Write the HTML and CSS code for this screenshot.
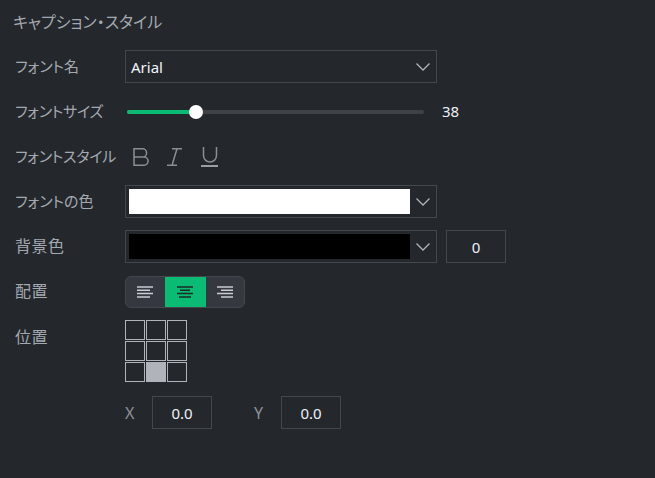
FILE: index.html
```html
<!DOCTYPE html>
<html lang="ja">
<head>
  <meta charset="UTF-8" />
  <title>キャプション・スタイル</title>
  <link rel="stylesheet" href="styles.css">
</head>
<body>
<h1 class="title">キャプション・スタイル</h1>

<div class="row">
  <label class="label">フォント名</label>
  <div class="select">
    <span class="select-text">Arial</span>
    <svg class="arrow" width="14" height="8" viewBox="0 0 14 8"><path d="M.5.500L7 7 13.500.5"/></svg>
  </div>
</div>

<div class="row">
  <label class="label label-tight">フォントサイズ</label>
  <div class="slider">
    <div class="slider-fill"></div>
    <div class="slider-thumb"></div>
  </div>
  <span class="slider-value">38</span>
</div>

<div class="row">
  <label class="label label-tight">フォントスタイル</label>
  <div class="styles">
    <svg width="17" height="20" viewBox="0 0 17 20"><path d="M2 1.800h8.500a4 4 0 0 1 0 8.200H2zM2 10h10a4 4 0 0 1 0 8.200H2z"/></svg>
    <svg width="18" height="20" viewBox="0 0 18 20"><path d="M6 1.800h10M1 18.200h10M11 1.800l-5 16.400"/></svg>
    <svg width="18" height="20" viewBox="0 0 18 20"><path d="M2.500 0v8.500a6.500 6.500 0 0 0 13 0V0"/><path class="underline" d="M0 19h17"/></svg>
  </div>
</div>

<div class="row">
  <label class="label">フォントの色</label>
  <div class="select select-color">
    <div class="swatch swatch-white"></div>
    <svg class="arrow" width="14" height="8" viewBox="0 0 14 8"><path d="M.5.500L7 7 13.500.5"/></svg>
  </div>
</div>

<div class="row">
  <label class="label label-kanji">背景色</label>
  <div class="select select-color">
    <div class="swatch swatch-black"></div>
    <svg class="arrow" width="14" height="8" viewBox="0 0 14 8"><path d="M.5.500L7 7 13.500.5"/></svg>
  </div>
  <div class="num num-opacity">0</div>
</div>

<div class="row">
  <label class="label label-kanji">配置</label>
  <div class="align">
    <div class="align-btn">
      <svg width="16" height="12" viewBox="0 0 16 12"><path d="M0 1h16M0 4.300h13M0 7.600h16M0 10.900h13"/></svg>
    </div>
    <div class="align-btn active">
      <svg width="16" height="12" viewBox="0 0 16 12"><path d="M0 1h16M3 4.300h10M0 7.600h16M2 10.900h12"/></svg>
    </div>
    <div class="align-btn">
      <svg width="16" height="12" viewBox="0 0 16 12"><path d="M0 1h16M4 4.300h12M0 7.600h16M4 10.900h12"/></svg>
    </div>
  </div>
</div>

<div class="row row-top">
  <label class="label label-kanji">位置</label>
  <div class="grid">
    <div class="cell"></div><div class="cell"></div><div class="cell"></div>
    <div class="cell"></div><div class="cell"></div><div class="cell"></div>
    <div class="cell"></div><div class="cell on"></div><div class="cell"></div>
  </div>
</div>

<div class="row row-pos">
  <span class="axis">X</span>
  <div class="num">0.0</div>
  <span class="axis axis-y">Y</span>
  <div class="num">0.0</div>
</div>
</body>
</html>
```

FILE: styles.css
```css
body {
  margin: 0;
  padding: 0 15px;
  background: #24272c;
  color: #a4a9b1;
  font-family: "Noto Sans CJK JP", "Noto Sans", sans-serif;
  font-size: 15px;
  font-feature-settings: "palt";
  overflow: hidden;
}
.title {
  margin: 0 0 17px -2px;
  height: 33px;
  line-height: 43px;
  font-size: 16px;
  font-weight: 400;
}
.row {
  display: flex;
  align-items: center;
  height: 33px;
  margin-bottom: 12px;
}
.row-top {
  align-items: flex-start;
  height: 62px;
  margin-bottom: 14px;
}
.row-top .label {
  padding-bottom: 0;
  line-height: 32px;
}
.label {
  flex: none;
  width: 110px;
  padding-bottom: 3px;
  white-space: nowrap;
}
.label-tight {
  letter-spacing: -0.25px;
}
.label-kanji {
  font-size: 16px;
  letter-spacing: 0.5px;
}
.select {
  display: flex;
  align-items: center;
  box-sizing: border-box;
  width: 312px;
  height: 33px;
  padding: 0 6px 0 5px;
  border: 1px solid #44474d;
}
.select-text {
  flex: 1;
  color: #f2f6fb;
  font-family: "Noto Sans", sans-serif;
  font-size: 15px;
}
.select-color {
  padding: 0 6px 0 3px;
}
.arrow {
  flex: none;
  fill: none;
  stroke: #b0b4bb;
  stroke-width: 1.300;
}
.swatch {
  flex: 1;
  height: 25px;
  margin-right: 6px;
}
.swatch-white { background: #fff; }
.swatch-black { background: #000; }
.slider {
  position: relative;
  width: 297px;
  height: 4px;
  margin-left: 2px;
  background: #3e4147;
  border-radius: 2px;
}
.slider-fill {
  width: 69px;
  height: 4px;
  background: #0abb74;
  border-radius: 2px;
}
.slider-thumb {
  position: absolute;
  left: 62px;
  top: -5px;
  width: 14px;
  height: 14px;
  background: #fff;
  border-radius: 50%;
}
.slider-value {
  margin-left: 18px;
  padding-bottom: 1px;
  color: #eef2f7;
  font-family: "Noto Sans", sans-serif;
}
.styles {
  display: flex;
  align-items: center;
  gap: 17px;
  margin-left: 7px;
}
.styles svg {
  fill: none;
  stroke: #8a8e95;
  stroke-width: 1.500;
}
.styles .underline {
  stroke: #9a9ea5;
  stroke-width: 2;
}
.num {
  box-sizing: border-box;
  width: 60px;
  height: 33px;
  line-height: 33px;
  text-align: center;
  border: 1px solid #44474d;
  color: #eef2f7;
  font-family: "Noto Sans", sans-serif;
}
.num-opacity {
  margin-left: 9px;
}
.align {
  display: flex;
  box-sizing: border-box;
  width: 120px;
  height: 32px;
  margin-top: 1px;
  overflow: hidden;
  background: #35383f;
  border: 1px solid #43464c;
  border-radius: 6px;
}
.align-btn {
  flex: 1;
  display: flex;
  align-items: center;
  justify-content: center;
}
.align-btn svg {
  margin-bottom: 1px;
  fill: none;
  stroke: #c9ccd1;
  stroke-width: 1.500;
}
.align-btn.active {
  flex: none;
  width: 41px;
  margin: -1px 0;
  background: #0abb74;
}
.align-btn.active svg {
  stroke: #1d2a28;
}
.grid {
  display: grid;
  grid-template-columns: repeat(3, 20px);
  grid-auto-rows: 20px;
  gap: 1px;
}
.cell {
  border: 1px solid #b0b3ba;
}
.cell.on {
  background: #b0b3ba;
}
.row-pos {
  padding-left: 110px;
}
.axis {
  width: 27px;
  color: #8d929a;
  font-family: "Noto Sans", sans-serif;
  font-size: 16px;
}
.axis-y {
  margin-left: 42px;
}
```
